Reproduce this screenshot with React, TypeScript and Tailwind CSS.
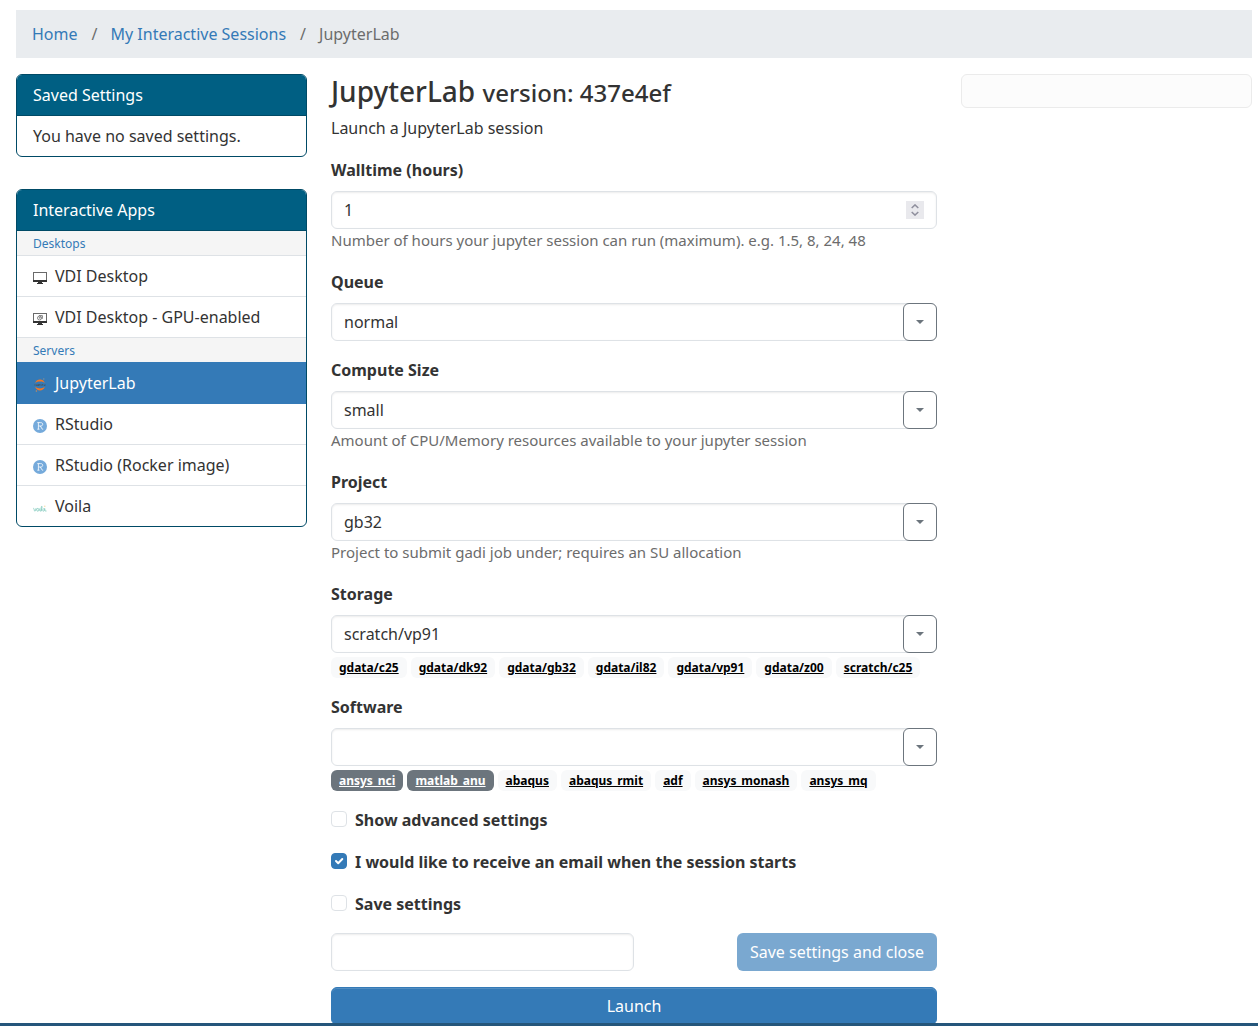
import React, { useId } from "react";

type IconProps = { className?: string };

function DesktopIcon({ gpu = false }: { gpu?: boolean }) {
  return (
    <svg viewBox="0 0 14 14" className="h-3.5 w-3.5" aria-hidden="true">
      <rect x="0.5" y="1.5" width="13" height="9" fill="#fff" stroke="#6a6a6a" />
      <rect x="0" y="9" width="14" height="2" fill="#333" />
      <rect x="5" y="11" width="4" height="1" fill="#333" />
      <rect x="4" y="12" width="6" height="1" fill="#333" />
      {gpu && (
        <g fill="none" stroke="#666" strokeWidth="0.8">
          <circle cx="6.5" cy="6" r="2" />
          <path d="M6 3.6h3.4v3.2" />
          <circle cx="6.8" cy="5.8" r="0.5" />
        </g>
      )}
    </svg>
  );
}

function JupyterIcon({ className }: IconProps) {
  return (
    <svg viewBox="0 0 14 14" className={className} aria-hidden="true">
      <path d="M2.2 5.200C3 2.600 4.800 1.500 7 1.500s4 1.100 4.800 3.700C10.400 4 8.700 3.600 7 3.600S3.600 4 2.200 5.200z" fill="#f37726" />
      <path d="M2.200 8.800C3 11.400 4.800 12.500 7 12.500s4-1.100 4.800-3.700C10.400 10 8.700 10.400 7 10.400S3.600 10 2.200 8.800z" fill="#f37726" />
      <path d="M2 6.300v1.400M3.500 6.500v1h1v-1M5.500 8V6.500h1v1M7.500 6.500l.6 1 .6-1M9.500 6.200v1.300M10.500 7h1v.600M12.200 7.500v-1" fill="none" stroke="#4e4e4e" strokeWidth="0.8" />
      <circle cx="10.800" cy="1" r="0.700" fill="#8a8f96" />
      <circle cx="3.400" cy="13" r="0.800" fill="#c98a5a" />
      <circle cx="2.900" cy="2.300" r="0.400" fill="#7d8086" />
    </svg>
  );
}

function RStudioIcon() {
  return (
    <svg viewBox="0 0 14 14" className="h-3.5 w-3.5" aria-hidden="true">
      <circle cx="7" cy="7" r="7" fill="#75aadb" />
      <path
        d="M4.300 3.600h3.200c1.400 0 2.200.6 2.200 1.700S8.900 7 7.500 7H5.600M4.300 10.200h2.200M5.400 3.600v6.600M7.300 7l2 3.200h.9"
        fill="none"
        stroke="#fff"
        strokeOpacity="0.9"
        strokeWidth="0.9"
      />
    </svg>
  );
}

function VoilaIcon() {
  return (
    <svg viewBox="0 0 14 14" className="h-3.5 w-3.5" aria-hidden="true">
      <path
        d="M.3 7.200c.9-.3.9 3 1.500 3S3 8 3 7.200M4.800 7.400c-1.700 0-1.500 2.800 0 2.800s1.500-2.800 0-2.800M6.800 7.400v2.200c.2 1 1 .6 1.300 0 1-2 1.200-4.400.6-4.400s-.9 5 .1 5M11.400 7.600c-1.700-.4-2.200 2.600-.8 2.600.8 0 1.100-1.400 1.100-2.600 0 2 .4 2.800 1.800 2.400"
        fill="none"
        stroke="#7cc8ba"
        strokeWidth="0.8"
      />
      <circle cx="11.800" cy="5.200" r="0.700" fill="#f7d9a0" />
    </svg>
  );
}

const inputClass =
  "block h-[38px] w-full rounded-md border border-[#dee2e6] bg-white px-3 text-base text-[#333] shadow-[inset_0_1px_2px_rgba(0,0,0,0.075)]";

function Field({
  label,
  help,
  children,
}: {
  label: string;
  help?: string;
  children: (id: string) => React.ReactNode;
}) {
  const id = useId();
  return (
    <div className="mb-[17px]">
      <label htmlFor={id} className="mb-[9px] block font-bold">
        {label}
      </label>
      {children(id)}
      {help && <p className="mb-[19px] text-[15px] leading-[22px] text-[#6c6c6c]">{help}</p>}
    </div>
  );
}

function SelectField({
  label,
  value,
  help,
  children,
}: {
  label: string;
  value: string;
  help?: string;
  children?: React.ReactNode;
}) {
  return (
    <Field label={label} help={help}>
      {(id) => (
        <>
          <div className="relative">
            <select id={id} defaultValue={value} className={`${inputClass} appearance-none pr-12`}>
              <option value={value}>{value}</option>
            </select>
            <span className="pointer-events-none absolute inset-y-0 right-0 flex w-[34px] items-center justify-center rounded-md border border-[#6c757d] bg-white">
              <svg viewBox="0 0 8 4" className="h-1 w-2" aria-hidden="true">
                <path d="M0 0h8L4 4z" fill="#6c757d" />
              </svg>
            </span>
          </div>
          {children}
        </>
      )}
    </Field>
  );
}

function Chips({ names, dark = [] }: { names: string[]; dark?: string[] }) {
  return (
    <div className="flex flex-wrap gap-1 pt-1">
      {names.map((name) => (
        <a
          key={name}
          href="#"
          className={`rounded-md px-2 text-xs leading-[21px] font-bold underline ${
            dark.includes(name) ? "bg-[#6c757d] text-white" : "bg-[#f8f9fa] text-black"
          }`}
        >
          {name}
        </a>
      ))}
    </div>
  );
}

function Check({ label, checked = false }: { label: string; checked?: boolean }) {
  return (
    <label className="flex items-start gap-2 font-bold">
      <span className="relative mt-[3px] h-4 w-4 shrink-0">
        <input
          type="checkbox"
          defaultChecked={checked}
          className="peer block h-4 w-4 appearance-none rounded border border-[#dee2e6] bg-white checked:border-[#347ab7] checked:bg-[#347ab7]"
        />
        <svg
          viewBox="0 0 16 16"
          className="pointer-events-none absolute inset-0 hidden h-4 w-4 peer-checked:block"
          aria-hidden="true"
        >
          <path d="M5 8l2.200 2.200L11.300 6" fill="none" stroke="#fff" strokeWidth="2" strokeLinecap="round" strokeLinejoin="round" />
        </svg>
      </span>
      {label}
    </label>
  );
}

function Item({
  icon,
  children,
  active = false,
  last = false,
}: {
  icon: React.ReactNode;
  children: React.ReactNode;
  active?: boolean;
  last?: boolean;
}) {
  return (
    <a
      href="#"
      className={`flex items-center gap-2 px-4 py-2 ${
        active
          ? "border-y border-[#347ab7] bg-[#347ab7] text-white"
          : last
            ? ""
            : "border-b border-[#dee2e6]"
      }`}
    >
      <span className="mt-[3px] shrink-0">{icon}</span>
      {children}
    </a>
  );
}

function CardHeader({ children }: { children: React.ReactNode }) {
  return (
    <h2 className="border-b border-[#004a66] bg-[#005f83] px-4 py-2 text-white">{children}</h2>
  );
}

const cardClass = "overflow-hidden rounded-md border border-[#004a66] bg-white";

const groupClass = "bg-[#f5f5f5] px-4 pt-1 pb-0.5 text-xs leading-[18px] text-[#347ab7]";

export default function App() {
  return (
    <div className="min-h-screen bg-white pt-2.5 pr-1.5 pl-4 font-['Noto_Sans',sans-serif] text-base leading-6 text-[#333]">
      <nav aria-label="Breadcrumb" className="mb-4 bg-[#e9ecef] px-4 py-3">
        <ol className="flex flex-wrap text-[#6c6c6c]">
          <li>
            <a href="#" className="text-[#347ab7]">Home</a>
          </li>
          <li>
            <span className="pr-[13px] pl-3.5">/</span>
            <a href="#" className="text-[#347ab7]">My Interactive Sessions</a>
          </li>
          <li aria-current="page">
            <span className="pr-[13px] pl-3.5">/</span>JupyterLab
          </li>
        </ol>
      </nav>

      <div className="grid grid-cols-4 items-start gap-6">
        <aside className="flex flex-col gap-8">
          <section className={cardClass}>
            <CardHeader>Saved Settings</CardHeader>
            <p className="px-4 py-2">You have no saved settings.</p>
          </section>

          <section className={cardClass}>
            <CardHeader>Interactive Apps</CardHeader>
            <h3 className={`border-b border-[#dee2e6] ${groupClass}`}>Desktops</h3>
            <Item icon={<DesktopIcon />}>VDI Desktop</Item>
            <Item icon={<DesktopIcon gpu />}>VDI Desktop - GPU-enabled</Item>
            <h3 className={groupClass}>Servers</h3>
            <Item icon={<JupyterIcon className="h-3.5 w-3.5" />} active>JupyterLab</Item>
            <Item icon={<RStudioIcon />}>RStudio</Item>
            <Item icon={<RStudioIcon />}>RStudio (Rocker image)</Item>
            <Item icon={<VoilaIcon />} last>Voila</Item>
          </section>
        </aside>

        <main className="col-span-2">
          <h1 className="mb-2 text-[28px] leading-[34px] font-medium">
            JupyterLab <small className="text-2xl leading-none">version: 437e4ef</small>
          </h1>
          <p className="mb-[18px]">Launch a JupyterLab session</p>

          <form onSubmit={(e) => e.preventDefault()}>
            <Field label="Walltime (hours)" help="Number of hours your jupyter session can run (maximum). e.g. 1.5, 8, 24, 48">
              {(id) => (
                <div className="relative">
                  <input
                    id={id}
                    type="number"
                    defaultValue={1}
                    className={`${inputClass} [appearance:textfield] [&::-webkit-inner-spin-button]:appearance-none`}
                  />
                  <span className="pointer-events-none absolute top-2.5 right-[13px] flex h-[18px] w-[18px] items-center justify-center bg-[#e9e9ed]">
                    <svg viewBox="0 0 8 12" className="h-3 w-2" aria-hidden="true">
                      <path d="M0.700 4L4 0.900 7.300 4M0.700 8L4 11.100 7.300 8" fill="none" stroke="#8f8f9d" strokeWidth="1.500" />
                    </svg>
                  </span>
                </div>
              )}
            </Field>
            <SelectField label="Queue" value="normal" />
            <SelectField
              label="Compute Size"
              value="small"
              help="Amount of CPU/Memory resources available to your jupyter session"
            />
            <SelectField
              label="Project"
              value="gb32"
              help="Project to submit gadi job under; requires an SU allocation"
            />
            <SelectField label="Storage" value="scratch/vp91">
              <Chips
                names={["gdata/c25", "gdata/dk92", "gdata/gb32", "gdata/il82", "gdata/vp91", "gdata/z00", "scratch/c25"]}
              />
            </SelectField>
            <SelectField label="Software" value="">
              <Chips
                names={["ansys_nci", "matlab_anu", "abaqus", "abaqus_rmit", "adf", "ansys_monash", "ansys_mq"]}
                dark={["ansys_nci", "matlab_anu"]}
              />
            </SelectField>

            <div className="mb-[17px] flex flex-col gap-[18px]">
              <Check label="Show advanced settings" />
              <Check label="I would like to receive an email when the session starts" checked />
              <Check label="Save settings" />
            </div>

            <div className="mb-4 flex items-center justify-between">
              <div className="w-1/2">
                <input type="text" aria-label="Settings name" className={inputClass} />
              </div>
              <button
                type="button"
                disabled
                className="h-[38px] rounded-md bg-[#347ab7] px-[13px] text-white opacity-65"
              >
                Save settings and close
              </button>
            </div>
            <button
              type="submit"
              className="block h-[38px] w-full rounded-md border border-[#347ab7] bg-[#347ab7] text-white shadow-[inset_0_1px_0_rgba(255,255,255,0.15)]"
            >
              Launch
            </button>
          </form>
        </main>

        <aside className="h-[34px] rounded-md border border-[#ebebeb] bg-[#fcfcfc]" />
      </div>

      <footer className="fixed inset-x-0 bottom-0 h-[3px] bg-[#25567b]" />
    </div>
  );
}
